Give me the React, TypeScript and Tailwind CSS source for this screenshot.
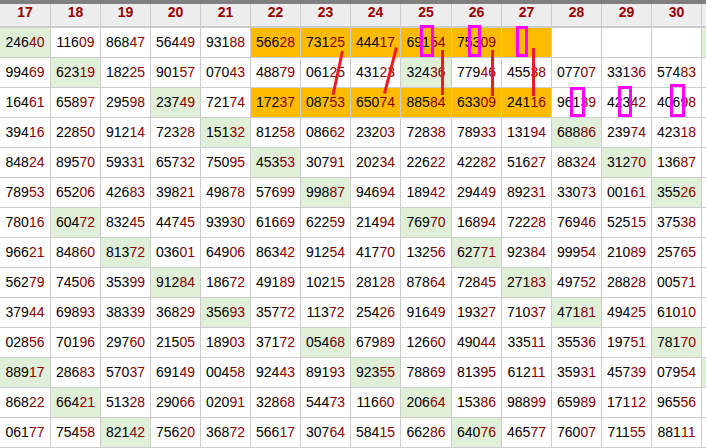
const headers = ["17","18","19","20","21","22","23","24","25","26","27","28","29","30",""];

const rows: string[][] = [
  ["24640","11609","86847","56449","93188","56628","73125","44417","69154","75309","","","",""],
  ["99469","62319","18225","90157","07043","48879","06125","43123","32436","77946","45538","07707","33136","57483"],
  ["16461","65897","29598","23749","72174","17237","08753","65074","88584","63309","24116","96139","42342","40698"],
  ["39416","22850","91214","72328","15132","81258","08662","23203","72838","78933","13194","68886","23974","42318"],
  ["84824","89570","59331","65732","75095","45353","30791","20234","22622","42282","51627","88324","31270","13687"],
  ["78953","65206","42683","39821","49878","57699","99887","94694","18942","29449","89231","33073","00161","35526"],
  ["78016","60472","83245","44745","93930","61669","62259","21494","76970","16894","72228","76946","52515","37538"],
  ["96621","84860","81372","03601","64906","86342","91254","41770","13256","62771","92384","99954","21089","25765"],
  ["56279","74506","35399","91284","18672","49189","10215","28128","87864","72845","27183","49752","28828","00571"],
  ["37944","69893","38339","36829","35693","35772","11372","25426","91649","19327","71037","47181","49425","61010"],
  ["02856","70196","29760","21505","18903","37172","05468","67989","12660","49044","33511","35536","19751","78170"],
  ["88917","28683","57037","69149","00458","92443","89193","92355","78869","81395","61211","35931","45739","07954"],
  ["86822","66421","51328","29066","02091","32868","54473","11660","20664","15386","98899","65989","17112","96556"],
  ["06177","75458","82142","75620","36872","56617","30764","58415","66286","64076","46577","76007","71155","88111"],
];

const green: Record<number, number[]> = {
  0: [0, 14],
  1: [1, 8],
  2: [3],
  3: [4, 11],
  4: [5, 12],
  5: [6, 13],
  6: [1, 8],
  7: [2, 9],
  8: [3, 10],
  9: [4, 11],
  10: [6, 13],
  11: [0, 7, 14],
  12: [1, 8],
  13: [2, 9],
};

const orangeRows = [0, 2];

function cellBg(r: number, c: number) {
  if (orangeRows.includes(r) && c >= 5 && c <= 10) return "bg-[#ffbb00]";
  if (green[r]?.includes(c)) return "bg-[#dfefd8]";
  return "bg-white";
}

const lines = [
  [342.5, 51, 333, 95],
  [396.5, 47.5, 384.5, 93.5],
  [442.5, 50, 442.5, 95],
  [492.5, 50, 492.5, 96],
  [533.5, 48, 533.5, 96],
];

const boxes = [
  [420, 25, 14, 32],
  [468, 25, 13, 32],
  [516, 26, 12, 31],
  [570, 87, 15, 30],
  [618, 86, 14, 31],
  [670, 84, 15, 33],
];

export default function App() {
  return (
    <div className="relative w-[706px] h-[448px] overflow-hidden bg-white font-['Liberation_Sans',Arial,sans-serif] text-[14px] text-black">
      <div className="h-1 bg-[#808080]" />
      <div className="grid grid-cols-[51px_repeat(7,50px)_51px_repeat(5,50px)_4px]">
        {headers.map((h, c) => (
          <div
            key={c}
            className={`h-6 pb-[5px] flex items-center justify-center bg-[#eeeeee] border-b-2 border-[#cccccc] font-bold text-[#990000] ${c === 14 ? "" : "border-r"}`}
          >
            {h}
          </div>
        ))}
        {rows.map((row, r) =>
          [...row, ""].map((v, c) => (
            <div
              key={`${r}-${c}`}
              className={`h-[30px] flex items-center justify-center border-b border-[#cccccc] ${c === 14 ? "" : "border-r"} ${cellBg(r, c)}`}
            >
              {v.slice(0, 3)}
              <span className="text-[#8b0000]">{v.slice(3)}</span>
            </div>
          ))
        )}
      </div>
      <svg className="absolute inset-0 pointer-events-none" width="706" height="448" viewBox="0 0 706 448">
        {lines.map(([x1, y1, x2, y2], i) => (
          <line key={i} x1={x1} y1={y1} x2={x2} y2={y2} stroke="#ed1c24" strokeWidth="3" />
        ))}
        {boxes.map(([x, y, w, h], i) => (
          <rect key={i} x={x + 1.5} y={y + 1.5} width={w - 3} height={h - 3} fill="none" stroke="#ff00ff" strokeWidth="3" />
        ))}
      </svg>
    </div>
  );
}
